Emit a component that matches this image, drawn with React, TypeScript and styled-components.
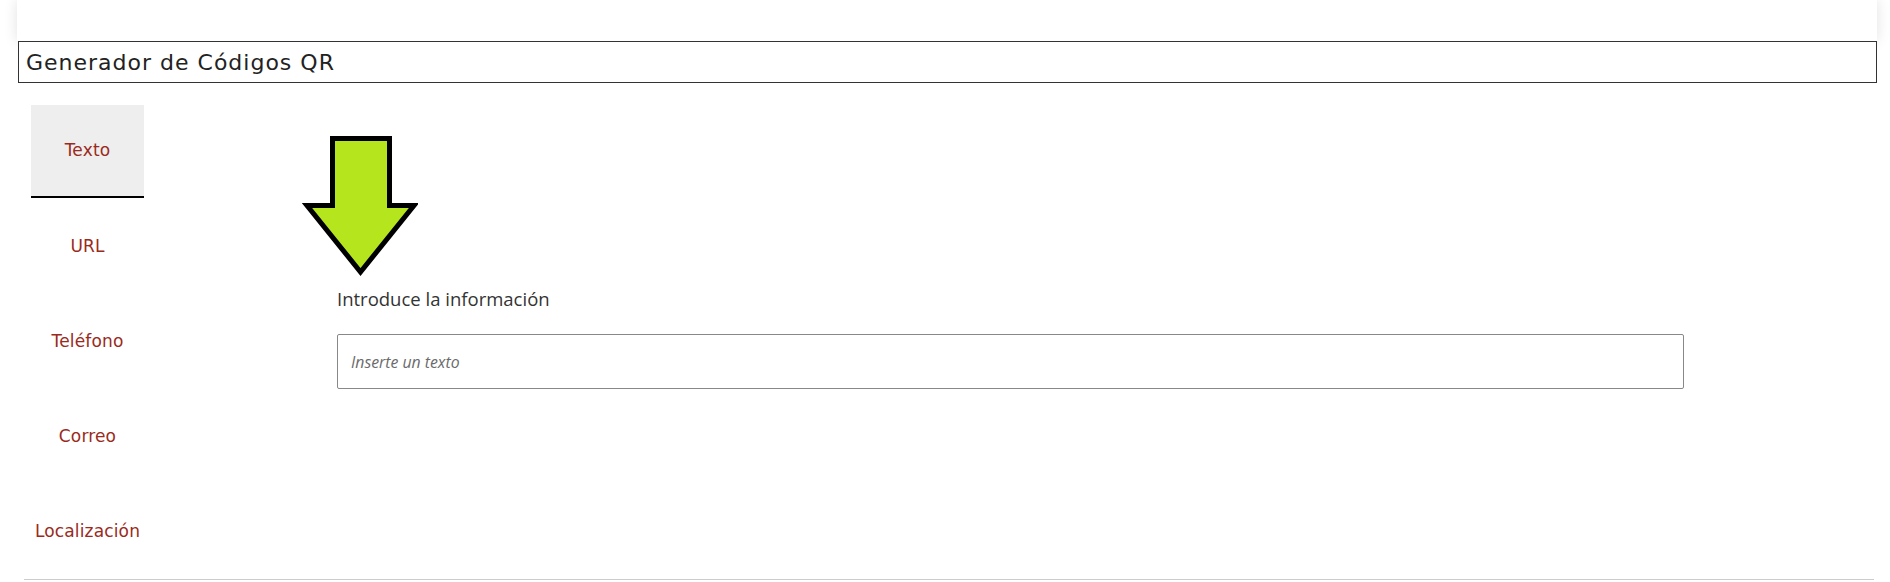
import React from "react";
import styled, { createGlobalStyle } from "styled-components";

const Global = createGlobalStyle`
  html, body { margin: 0; padding: 0; background: #fff; }
  body { font-family: "DejaVu Sans", sans-serif; }
  * { box-sizing: border-box; }
`;

const Page = styled.div`
  width: 1890px;
  height: 582px;
  overflow: hidden;
  padding: 0 13px 0 17px;
`;

const TopBar = styled.div`
  height: 41px;
  background: #fff;
  box-shadow: 0 0 14px rgba(0, 0, 0, 0.12);
`;

const TitleBox = styled.div`
  margin-left: 1px;
  height: 42px;
  border: 1px solid #333;
  display: flex;
  align-items: center;
  padding-left: 7px;
  padding-top: 1px;
  font-family: "DejaVu Sans", sans-serif;
  font-size: 22px;
  letter-spacing: 1px;
  color: #222;
  position: relative;
  background: #fff;
`;

const Main = styled.div`
  display: flex;
  margin-top: 22px;
  padding-left: 14px;
`;

const Tabs = styled.nav`
  width: 113px;
  display: flex;
  flex-direction: column;
`;

const Tab = styled.div<{ $active?: boolean }>`
  height: ${(p) => (p.$active ? "93px" : "95px")};
  display: flex;
  align-items: center;
  justify-content: center;
  font-family: "DejaVu Sans", sans-serif;
  font-size: 17px;
  letter-spacing: 0.15px;
  color: #9a2a1c;
  white-space: nowrap;
  background: ${(p) => (p.$active ? "#eeeeee" : "transparent")};
  border-bottom: ${(p) => (p.$active ? "2px solid #000" : "none")};
  padding-bottom: ${(p) => (p.$active ? "1px" : "0")};
`;

const Content = styled.div`
  margin-left: 158px;
  padding-top: 28px;
  display: flex;
  flex-direction: column;
`;

const ArrowSvg = styled.svg`
  display: block;
  width: 118px;
  height: 146px;
  margin-left: -2px;
`;

const Label = styled.label`
  margin-top: 8px;
  margin-left: 35px;
  font-family: "Open Sans", sans-serif;
  font-size: 18.5px;
  color: #333;
  line-height: 24px;
`;

const Input = styled.input`
  margin-top: 23px;
  margin-left: 35px;
  width: 1347px;
  height: 55px;
  border: 1px solid #888;
  border-radius: 2px;
  padding: 0 13px;
  font-family: "Open Sans", sans-serif;
  font-size: 15.8px;
  outline: none;
  &::placeholder {
    color: #6a6a6a;
    font-style: italic;
  }
`;

const BottomRule = styled.div`
  margin: 1px 3px 0 7px;
  height: 1px;
  background: #cccccc;
`;

export default function App() {
  return (
    <>
      <Global />
      <Page>
        <TopBar />
        <TitleBox>Generador de Códigos QR</TitleBox>
        <Main>
          <Tabs>
            <Tab $active>Texto</Tab>
            <Tab>URL</Tab>
            <Tab>Teléfono</Tab>
            <Tab>Correo</Tab>
            <Tab>Localización</Tab>
          </Tabs>
          <Content>
            <ArrowSvg viewBox="0 0 118 146">
              <polygon
                points="32.5,5.5 89.5,5.5 89.5,72.5 114,72.5 60.5,139 7,72.5 32.5,72.5"
                fill="#b5e61d"
                stroke="#000"
                strokeWidth="5"
                strokeLinejoin="miter"
              />
            </ArrowSvg>
            <Label>Introduce la información</Label>
            <Input placeholder="Inserte un texto" />
          </Content>
        </Main>
        <BottomRule />
      </Page>
    </>
  );
}
